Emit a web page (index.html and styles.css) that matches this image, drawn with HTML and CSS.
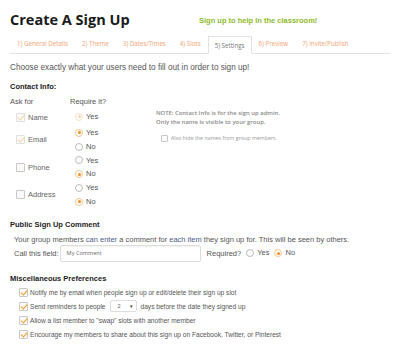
FILE: index.html
```html
<!DOCTYPE html>
<html>
  <head>
    <link rel="stylesheet" href="styles.css">
  </head>
  <body>
    <main class="page">
      <header class="top">
        <h1 class="title">Create A Sign Up</h1>
        <p class="tagline">Sign up to help in the classroom!</p>
      </header>

      <nav class="tabs">
        <span class="tab">1) General Details</span>
        <span class="tab">2) Theme</span>
        <span class="tab">3) Dates/Times</span>
        <span class="tab">4) Slots</span>
        <span class="tab active">5) Settings</span>
        <span class="tab">6) Preview</span>
        <span class="tab">7) Invite/Publish</span>
      </nav>

      <p class="intro">Choose exactly what your users need to fill out in order to sign up!</p>

      <section class="block">
        <h2 class="block-title">Contact Info:</h2>
        <div class="contact">
          <span class="col-head">Ask for</span>
          <span class="col-head">Require it?</span>

          <label class="field"><i class="box checked faded"></i>Name</label>
          <div class="radios single">
            <span class="opt"><i class="radio on faded"></i>Yes</span>
          </div>

          <label class="field"><i class="box checked faded"></i>Email</label>
          <div class="radios">
            <span class="opt"><i class="radio on"></i>Yes</span>
            <span class="opt"><i class="radio"></i>No</span>
          </div>

          <label class="field"><i class="box"></i>Phone</label>
          <div class="radios">
            <span class="opt"><i class="radio"></i>Yes</span>
            <span class="opt"><i class="radio on"></i>No</span>
          </div>

          <label class="field"><i class="box"></i>Address</label>
          <div class="radios">
            <span class="opt"><i class="radio"></i>Yes</span>
            <span class="opt"><i class="radio on"></i>No</span>
          </div>

          <div class="note">
            <p class="note-text">NOTE: Contact Info is for the sign up admin.<br>Only the name is visible to your group.</p>
            <label class="hide-names"><i class="box small"></i>Also hide the names from group members</label>
          </div>
        </div>
      </section>

      <section class="block comment-block">
        <h2 class="block-title">Public Sign Up Comment</h2>
        <p class="indent">Your group members <span class="hl">can enter</span> a comment for <span class="hl">each item</span> they sign up for. This will be seen by others.</p>
        <div class="indent comment-row">
          <span>Call this field:</span>
          <span class="input">My Comment</span>
          <span class="req">Required?</span>
          <span class="opt"><i class="radio"></i>Yes</span>
          <span class="opt"><i class="radio on"></i>No</span>
        </div>
      </section>

      <section class="block misc-block">
        <h2 class="block-title">Miscellaneous Preferences</h2>
        <ul class="prefs">
          <li><i class="box checked"></i>Notify me by email when people sign up or edit/delete their sign up slot</li>
          <li><i class="box checked"></i>Send reminders to people <span class="select">2<em>&#9662;</em></span> days before the date they signed up</li>
          <li><i class="box checked"></i>Allow a list member to "swap" slots with another member</li>
          <li><i class="box checked"></i>Encourage my members to share about this sign up on Facebook, Twitter, or Pinterest</li>
        </ul>
      </section>
    </main>
  </body>
</html>
```

FILE: styles.css
```css
* {
  margin: 0;
  padding: 0;
  box-sizing: border-box;
}

html, body {
  width: 100%;
  height: 100%;
  overflow: hidden;
}

body {
  background: #fff;
  color: #555;
  font-family: "Liberation Sans", Arial, sans-serif;
  font-size: 7.5px;
}

ul {
  list-style: none;
}

.page {
  padding: 6px 10px 0 10px;
}

.top {
  display: flex;
  align-items: center;
  height: 26px;
}

.title {
  font-family: "Open Sans", sans-serif;
  font-weight: 700;
  font-size: 14.5px;
  color: #1a1a1a;
  width: 189px;
}

.tagline {
  color: #8cba2a;
  font-weight: 700;
  font-size: 7.5px;
  padding-top: 2px;
}

.tabs {
  display: flex;
  align-items: flex-end;
  margin-top: 4px;
  height: 18px;
  border-bottom: 1px solid #e2e2e2;
}

.tab {
  font-family: "Open Sans", sans-serif;
  font-size: 6.2px;
  color: #f3a574;
  height: 18px;
  line-height: 17px;
  padding: 0 7px;
}

.tab.active {
  color: #777;
  border: 1px solid #e2e2e2;
  border-bottom: 1px solid #fff;
  margin-bottom: -1px;
  background: #fff;
  padding: 0 6px;
}

.intro {
  margin-top: 9px;
  font-size: 8.2px;
}

.block {
  margin-top: 10px;
}

.comment-block {
  margin-top: 11px;
}

.misc-block {
  margin-top: 12px;
}

.block-title {
  font-size: 7.5px;
  font-weight: 700;
  color: #222;
  margin-bottom: 6px;
}

.contact {
  display: grid;
  grid-template-columns: 60px 86px 1fr;
}

.col-head {
  line-height: 10px;
  margin-bottom: 1px;
}

.field {
  grid-column: 1;
  display: flex;
  align-items: center;
  padding-left: 6px;
  color: #666;
}

.radios {
  grid-column: 2;
  display: flex;
  flex-direction: column;
  padding-left: 5px;
  justify-content: center;
}

.radios.single {
  min-height: 18px;
}

.opt {
  display: inline-flex;
  align-items: center;
  line-height: 13.8px;
  color: #555;
}

.note {
  grid-column: 3;
  grid-row: 2 / span 3;
  padding-top: 1px;
}

.note-text {
  font-family: "Open Sans", sans-serif;
  font-weight: 600;
  font-size: 5.9px;
  line-height: 9px;
  color: #8a8a8a;
}

.hide-names {
  display: flex;
  align-items: center;
  margin-top: 7px;
  padding-left: 5px;
  font-family: "Open Sans", sans-serif;
  font-size: 5.3px;
  color: #999;
}

.box {
  display: inline-block;
  position: relative;
  width: 9px;
  height: 9px;
  border: 1px solid #c8c8c8;
  border-radius: 1px;
  background: #fafafa;
  margin-right: 3px;
  flex: none;
}

.box.small {
  width: 7px;
  height: 7px;
  margin-right: 3px;
}

.box.checked::after {
  content: "";
  position: absolute;
  left: 2px;
  top: 0px;
  width: 3px;
  height: 5px;
  border: solid #f39a1e;
  border-width: 0 1.4px 1.4px 0;
  transform: rotate(40deg);
}

.box.faded {
  border-color: #e0e0e0;
}

.box.faded::after {
  border-color: #f8d3a3;
}

.radio {
  display: inline-block;
  position: relative;
  width: 8px;
  height: 8px;
  border: 1px solid #bbb;
  border-radius: 50%;
  background: #fff;
  margin-right: 3px;
  flex: none;
}

.radio.on {
  border-color: #f7c48c;
}

.radio.on::after {
  content: "";
  position: absolute;
  left: 1.5px;
  top: 1.5px;
  width: 3px;
  height: 3px;
  border-radius: 50%;
  background: #f39018;
}

.radio.faded {
  border-color: #f6e0c4;
}

.radio.faded::after {
  background: #f8d7ac;
}

.indent {
  padding-left: 4px;
}

.hl {
  color: #4c5c8c;
}

.comment-row {
  display: flex;
  align-items: center;
  margin-top: 1px;
}

.input {
  display: inline-block;
  width: 141px;
  height: 17px;
  line-height: 15px;
  border: 1px solid #ddd;
  border-radius: 2px;
  margin-left: 1px;
  padding-left: 6px;
  font-family: "Open Sans", sans-serif;
  font-size: 5.6px;
  color: #666;
  box-shadow: inset 0 1px 1px rgba(0, 0, 0, 0.05);
}

.req {
  margin-left: 6px;
  margin-right: 5px;
}

.comment-row .opt {
  margin-right: 5px;
}

.prefs {
  padding-left: 9px;
  font-size: 6.6px;
  margin-top: -3px;
}

.prefs li {
  display: flex;
  align-items: center;
  height: 13.8px;
}

.prefs .box {
  margin-right: 2px;
}

.select {
  display: inline-flex;
  justify-content: space-between;
  align-items: center;
  width: 27px;
  height: 12px;
  border: 1px solid #ddd;
  border-radius: 2px;
  margin: 0 4px;
  padding: 0 3px 0 7px;
  font-size: 5.5px;
}

.select em {
  font-style: normal;
  color: #333;
  font-size: 5px;
}
```
